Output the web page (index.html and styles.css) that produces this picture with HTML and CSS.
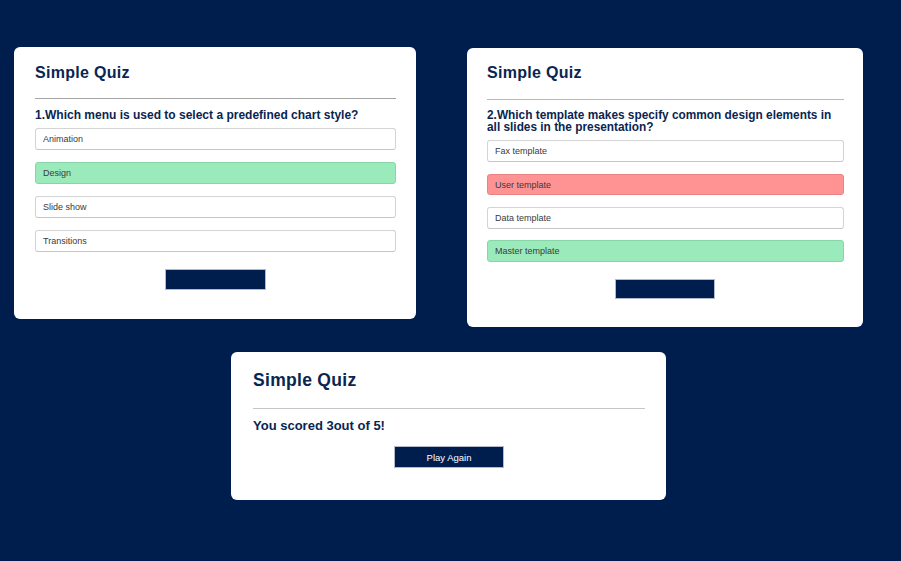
FILE: index.html
```html
<!DOCTYPE html>
<html lang="en">
<head>
<meta charset="utf-8">
<title>Simple Quiz</title>
<link rel="stylesheet" href="styles.css">
</head>
<body>
<main class="page">
  <div class="row top-row">
    <section class="card card-one">
      <h1 class="title">Simple Quiz</h1>
      <hr class="divider">
      <h2 class="question">1.Which menu is used to select a predefined chart style?</h2>
      <ul class="options">
        <li class="option">Animation</li>
        <li class="option correct">Design</li>
        <li class="option">Slide show</li>
        <li class="option">Transitions</li>
      </ul>
      <div class="actions"><button class="btn btn-empty"></button></div>
    </section>
    <section class="card card-two">
      <h1 class="title">Simple Quiz</h1>
      <hr class="divider">
      <h2 class="question">2.Which template makes specify common design elements in all slides in the presentation?</h2>
      <ul class="options">
        <li class="option">Fax template</li>
        <li class="option incorrect">User template</li>
        <li class="option">Data template</li>
        <li class="option correct">Master template</li>
      </ul>
      <div class="actions"><button class="btn btn-empty"></button></div>
    </section>
  </div>
  <div class="row bottom-row">
    <section class="card card-three">
      <h1 class="title">Simple Quiz</h1>
      <hr class="divider">
      <h2 class="score">You scored 3out of 5!</h2>
      <div class="actions"><button class="btn btn-play">Play Again</button></div>
    </section>
  </div>
</main>
</body>
</html>
```
FILE: styles.css
```css
* { box-sizing: border-box; }
html, body {
  margin: 0;
  padding: 0;
  background: #001e4d;
  min-height: 100%;
}
body {
  font-family: "Liberation Sans", Arial, sans-serif;
  color: #0a2551;
}
.page {
  padding-top: 47px;
}
.row {
  display: flex;
  align-items: flex-start;
}
.top-row {
  padding-left: 14px;
  gap: 51px;
}
.bottom-row {
  justify-content: center;
  padding-right: 4px;
  margin-top: 25px;
}
.card {
  background: #fff;
  border-radius: 6px;
}
.card-one {
  width: 402px;
  padding: 17px 20px 29px 21px;
}
.card-two {
  width: 396px;
  margin-top: 1px;
  padding: 16px 19px 28px 20px;
}
.card-three {
  width: 435px;
  padding: 18px 21px 32px 22px;
}
.title {
  margin: 0;
  font-size: 16px;
  font-weight: bold;
  line-height: 18px;
  letter-spacing: 0.3px;
}
.card-three .title {
  font-size: 17.5px;
  line-height: 20px;
}
.divider {
  border: 0;
  border-top: 1px solid #a4a4a4;
  margin: 16px 0 0 0;
}
.card-two .divider { margin-top: 17px; border-top-color: #b8b8b8; }
.card-three .divider { margin-top: 18px; border-top-color: #c6c6c6; }
.question {
  margin: 10px 0 0 0;
  font-size: 12px;
  line-height: 12px;
  font-weight: bold;
}
.card-two .question {
  font-size: 11.85px;
  line-height: 11.7px;
}
.score {
  margin: 10px 0 0 0;
  font-size: 13px;
  line-height: 14px;
  font-weight: bold;
}
.options {
  list-style: none;
  margin: 7px 0 0 0;
  padding: 0;
  display: flex;
  flex-direction: column;
  gap: 12px;
}
.card-two .options { gap: 11.6px; }
.option {
  height: 22px;
  border: 1px solid #d4d4d4;
  border-bottom-color: #c6c6c6;
  border-radius: 3px;
  padding-left: 7px;
  font-size: 9px;
  line-height: 20px;
  color: #3a3a3a;
  background: #fff;
}
.card-two .option { height: 21.7px; }
.option.correct { background: #9aeabc; border-color: #88d6a8; }
.option.incorrect { background: #ff9393; border-color: #e98383; }
.actions {
  display: flex;
  justify-content: center;
  margin-top: 17px;
}
.card-two .actions { margin-top: 16.7px; }
.card-three .actions { margin-top: 13px; }
.btn {
  background: #001e4d;
  border: 1px solid #b3bac8;
  color: #fff;
  font-family: "Liberation Sans", Arial, sans-serif;
  font-size: 9.5px;
  padding: 0;
  cursor: pointer;
}
.btn-empty { width: 101px; height: 21px; }
.card-two .btn-empty { width: 100px; height: 20.6px; margin-right: 1px; }
.btn-play { width: 110px; height: 22px; }
```
